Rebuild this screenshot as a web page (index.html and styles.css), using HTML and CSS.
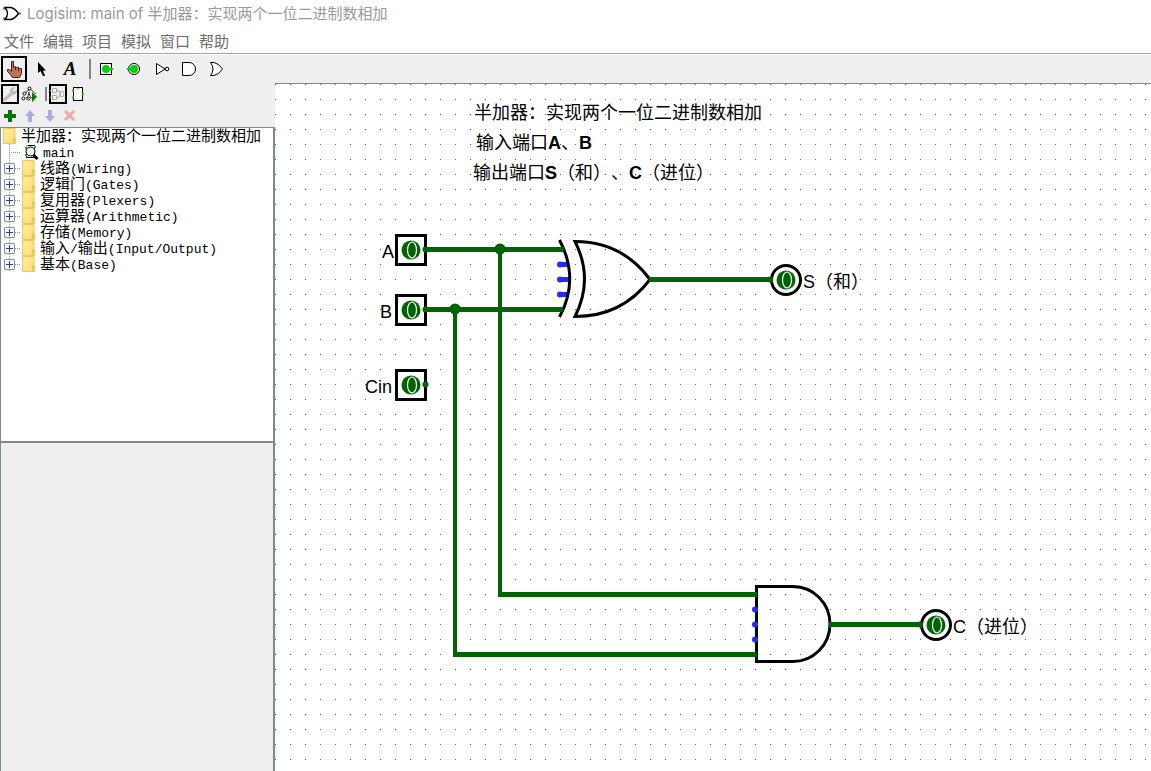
FILE: index.html
```html
<!DOCTYPE html>
<html lang="zh-CN">
<head>
<meta charset="utf-8">
<title>Logisim: main of 半加器：实现两个一位二进制数相加</title>
<link rel="stylesheet" href="styles.css">
</head>
<body>
<svg class="defs" width="0" height="0" aria-hidden="true">
  <defs>
    <linearGradient id="folderFill" x1="0" y1="0" x2="1" y2="1">
      <stop offset="0" stop-color="#ffeda6"/><stop offset="1" stop-color="#ffdb70"/>
    </linearGradient>
    <symbol id="folder" viewBox="0 0 14 16">
      <path d="M.5 .5H12V10H12.500V15.500H.5Z" fill="url(#folderFill)" stroke="#eec850"/>
      <path d="M10.500 15V10.500H12.500" fill="none" stroke="#e6b93c"/>
    </symbol>
    <symbol id="value" viewBox="0 0 20 20">
      <circle cx="10" cy="10" r="9.500" fill="#006400"/>
      <ellipse cx="11" cy="10" rx="4.500" ry="8" fill="none" stroke="#fff" stroke-width="1.200"/>
    </symbol>
  </defs>
</svg>

<header class="titlebar">
  <svg class="app-icon" width="20" height="16" viewBox="0 0 20 16">
    <path d="M1 2.500H4M1 12.500H4M17 7.500H19" stroke="#00c800" stroke-width="2"/>
    <path d="M3 1.500H9Q13 2.500 16.500 7.500Q13 12.500 9 13.500H3Q8 7.500 3 1.500Z" fill="#fff" stroke="#000" stroke-width="1.400"/>
  </svg>
  <h1 class="title">Logisim: main of 半加器：实现两个一位二进制数相加</h1>
</header>

<nav class="menubar" aria-label="菜单">
  <button class="menu">文件</button>
  <button class="menu">编辑</button>
  <button class="menu">项目</button>
  <button class="menu">模拟</button>
  <button class="menu">窗口</button>
  <button class="menu">帮助</button>
</nav>

<div class="toolbar" role="toolbar" aria-label="工具">
  <button class="tool selected" aria-label="戳工具">
    <svg width="20" height="20" viewBox="0 0 20 20"><path d="M7.500 2.500H9.500V8.500L11 7.500L12.500 8.500L14 8L15.500 9.500L17.500 9.500V14.500L15.500 18.500H8.500L6.500 15.500L3.500 12.500V10.500H5.500L7.500 12.500Z" fill="#bf7355" stroke="#41251b"/><path d="M11.500 8V11M14.500 9V12" stroke="#41251b" fill="none"/></svg>
  </button>
  <button class="tool" aria-label="编辑工具">
    <svg width="20" height="20" viewBox="0 0 20 20"><path d="M6 3V14L8.500 12L11 17H13L11 11.500H14Z" fill="#000"/></svg>
  </button>
  <button class="tool letter" aria-label="文本工具">A</button>
  <span class="separator"></span>
  <button class="tool" aria-label="输入引脚">
    <svg width="20" height="20" viewBox="0 0 20 20"><rect x="4.500" y="4.500" width="11" height="11" fill="#fff" stroke="#000"/><circle cx="10" cy="10" r="4" fill="#00d200"/><path d="M12 10H17" stroke="#00d200" stroke-width="2"/></svg>
  </button>
  <button class="tool" aria-label="输出引脚">
    <svg width="20" height="20" viewBox="0 0 20 20"><circle cx="10" cy="10" r="5.500" fill="#fff" stroke="#000"/><circle cx="10" cy="10" r="4" fill="#00d200"/><path d="M3 10H8" stroke="#00d200" stroke-width="2"/></svg>
  </button>
  <button class="tool" aria-label="非门">
    <svg width="20" height="20" viewBox="0 0 20 20"><path d="M4.500 4.500L13 10L4.500 15.500Z" fill="#fff" stroke="#000"/><circle cx="15" cy="10" r="1.800" fill="#fff" stroke="#000"/></svg>
  </button>
  <button class="tool" aria-label="与门">
    <svg width="20" height="20" viewBox="0 0 20 20"><path d="M2.500 3.500H9A6.500 6.500 0 0 1 9 16.500H2.500Z" fill="#fff" stroke="#000"/></svg>
  </button>
  <button class="tool" aria-label="或门">
    <svg width="20" height="20" viewBox="0 0 20 20"><path d="M2.500 3.500H6Q11 4.500 14.500 10Q11 15.500 6 16.500H2.500Q7.500 10 2.500 3.500Z" fill="#fff" stroke="#000"/></svg>
  </button>
</div>

<main class="workspace">
  <aside class="sidebar">
    <div class="minibar view" role="toolbar" aria-label="视图">
      <button class="mini selected" aria-label="工具箱">
        <svg width="16" height="16" viewBox="0 0 16 16"><path d="M1 13L8 6.500Q7 2.500 11 1L13.500 1.500L11 4L12 5.500L15 3.500Q15.500 9 10 9L3.500 15Q1 15.500 1 13Z" fill="#bdbdbd"/></svg>
      </button>
      <button class="mini" aria-label="仿真树">
        <svg width="18" height="18" viewBox="0 0 18 18"><path d="M8 4L2 11M9 4L15 9M8 4V10M8 9L5 14M8 9L11 14" stroke="#000" stroke-dasharray="2 1" fill="none"/><g fill="#fff" stroke="#000"><circle cx="8.500" cy="3.500" r="1.500"/><circle cx="3.500" cy="8.500" r="1.500"/><circle cx="2.500" cy="13.500" r="1.500"/><circle cx="7.500" cy="13.500" r="1.500"/></g><path d="M11 7L16 12L11 17Z" fill="#007d00"/></svg>
      </button>
      <span class="separator small"></span>
      <button class="mini selected" aria-label="编辑电路布局">
        <svg width="16" height="16" viewBox="0 0 16 16"><g fill="#fff" stroke="#aaa"><path d="M2.500 2.500H6.500V6.500H2.500Z"/><path d="M2.500 9.500H6.500V13.500H2.500Z"/><path d="M10.500 5.500H13Q15 8 13 10.500H10.500Z"/></g><path d="M0 4.500H2M0 11.500H2M7 4.500H9V7H10M7 11.500H9V9H10" fill="none" stroke="#90cf90"/></svg>
      </button>
      <button class="mini" aria-label="编辑电路外观">
        <svg width="16" height="16" viewBox="0 0 16 16"><rect x="3.500" y="1.500" width="9" height="13" fill="#fff" stroke="#000"/><path d="M6.500 2Q8 5 9.500 2" fill="none" stroke="#999"/><path d="M2 4.500H4M2 11.500H4M12 8H14" stroke="#00d200" stroke-width="2"/></svg>
      </button>
    </div>
    <div class="minibar edit" role="toolbar" aria-label="电路">
      <button class="mini" aria-label="添加电路"><svg width="16" height="16" viewBox="0 0 16 16"><path d="M6 2H10V6H14V10H10V14H6V10H2V6H6Z" fill="#067806"/></svg></button>
      <button class="mini" aria-label="上移"><svg width="16" height="16" viewBox="0 0 16 16"><path d="M8 2L13 8H10V14H6V8H3Z" fill="#a9a9ec"/></svg></button>
      <button class="mini" aria-label="下移"><svg width="16" height="16" viewBox="0 0 16 16"><path d="M8 14L13 8H10V2H6V8H3Z" fill="#a9a9ec"/></svg></button>
      <button class="mini" aria-label="删除电路"><svg width="16" height="16" viewBox="0 0 16 16"><path d="M3 3L12 12M12 3L3 12" stroke="#eda9a9" stroke-width="3"/></svg></button>
    </div>
    <div class="tree">
      <div class="root"><svg class="folder" width="14" height="16"><use href="#folder"/></svg><span>半加器：实现两个一位二进制数相加</span></div>
      <ul class="branches">
        <li class="node leaf">
          <svg class="circuit" width="16" height="16" viewBox="0 0 16 16"><path d="M4.500 1.500H11.500V13.500H3.500V2.500" fill="#fff" stroke="#000"/><path d="M2 4H4M2 11H4M11 3H13" stroke="#00c800" stroke-width="2"/><circle cx="7.500" cy="7.500" r="4.500" fill="#eef" stroke="#000"/><path d="M10.500 11L14.500 15" stroke="#000" stroke-width="3"/></svg>
          <span><span class="latin">main</span></span>
        </li>
        <li class="node"><button class="expander" aria-label="展开"></button><svg class="folder" width="14" height="16"><use href="#folder"/></svg><span>线路<span class="latin">(Wiring)</span></span></li>
        <li class="node"><button class="expander" aria-label="展开"></button><svg class="folder" width="14" height="16"><use href="#folder"/></svg><span>逻辑门<span class="latin">(Gates)</span></span></li>
        <li class="node"><button class="expander" aria-label="展开"></button><svg class="folder" width="14" height="16"><use href="#folder"/></svg><span>复用器<span class="latin">(Plexers)</span></span></li>
        <li class="node"><button class="expander" aria-label="展开"></button><svg class="folder" width="14" height="16"><use href="#folder"/></svg><span>运算器<span class="latin">(Arithmetic)</span></span></li>
        <li class="node"><button class="expander" aria-label="展开"></button><svg class="folder" width="14" height="16"><use href="#folder"/></svg><span>存储<span class="latin">(Memory)</span></span></li>
        <li class="node"><button class="expander" aria-label="展开"></button><svg class="folder" width="14" height="16"><use href="#folder"/></svg><span>输入<span class="latin">/</span>输出<span class="latin">(Input/Output)</span></span></li>
        <li class="node"><button class="expander" aria-label="展开"></button><svg class="folder" width="14" height="16"><use href="#folder"/></svg><span>基本<span class="latin">(Base)</span></span></li>
      </ul>
    </div>
    <div class="attributes"></div>
  </aside>

  <section class="canvas" aria-label="电路画布">
    <svg class="circuit-view" width="100%" height="100%">
      <defs>
        <pattern id="grid" width="15" height="15" patternUnits="userSpaceOnUse"><rect width="1" height="1" fill="#666"/></pattern>
      </defs>
      <rect width="100%" height="100%" fill="url(#grid)"/>
      <g transform="translate(-275 -84)">
        <g class="wires">
          <path d="M425 249.500H564M425 309.500H564M650 279.500H772M830 624.500H922M498 594.500H757M453 654.500H757"/>
          <path d="M500 249V597M455 309V657"/>
        </g>
        <g class="junctions">
          <circle cx="500" cy="249" r="5.500"/><circle cx="455" cy="309" r="5.500"/>
        </g>
        <g class="outline">
          <rect x="396.500" y="235.500" width="29" height="29"/>
          <rect x="396.500" y="295.500" width="29" height="29"/>
          <rect x="396.500" y="370.500" width="29" height="29"/>
          <circle cx="786" cy="280" r="14.500"/>
          <circle cx="936" cy="625" r="14.500"/>
        </g>
        <g class="junctions">
          <circle cx="425.500" cy="249.500" r="3"/><circle cx="425.500" cy="309.500" r="3"/><circle cx="425.500" cy="384.500" r="3"/>
          <circle cx="770" cy="279.500" r="3"/><circle cx="920" cy="624.500" r="3"/>
        </g>
        <use href="#value" x="401" y="240" width="20" height="20"/>
        <use href="#value" x="401" y="300" width="20" height="20"/>
        <use href="#value" x="401" y="375" width="20" height="20"/>
        <use href="#value" x="776" y="270" width="20" height="20"/>
        <use href="#value" x="926" y="615" width="20" height="20"/>

        <g class="floating">
          <path d="M559 264.500H569M559 279.500H569M559 294.500H569"/>
          <circle cx="560" cy="264.500" r="3"/><circle cx="560" cy="279.500" r="3"/><circle cx="560" cy="294.500" r="3"/>
        </g>
        <g class="outline">
          <path d="M559.500 240Q580 279 559.500 317"/>
          <path d="M575 241.500Q622 241.500 650 279.500Q622 316.500 575 316.500Q594 279 575 241.500Z"/>
          <path d="M756.500 586.500H793A37 37.500 0 0 1 793 661.500H756.500Z"/>
        </g>
        <path class="wires" d="M560 249.500H564M560 309.500H563M649 279.500H653M754 594.500H757M754 654.500H757M829 624.500H832"/>
        <g class="floating">
          <circle cx="755" cy="609.500" r="3"/><circle cx="755" cy="624.500" r="3"/><circle cx="755" cy="639.500" r="3"/>
        </g>

        <g class="label">
          <text x="382" y="258">A</text>
          <text x="380" y="318">B</text>
          <text x="365" y="393">Cin</text>
          <text x="803" y="288">S（和）</text>
          <text x="953" y="633">C（进位）</text>
        </g>
        <g class="label">
          <text x="474" y="119">半加器：实现两个一位二进制数相加</text>
          <text x="476" y="149">输入端口<tspan class="bold">A</tspan>、<tspan class="bold">B</tspan></text>
          <text x="473" y="179">输出端口<tspan class="bold">S</tspan>（和）、<tspan class="bold">C</tspan>（进位）</text>
        </g>
      </g>
    </svg>
  </section>
</main>
</body>
</html>
```
FILE: styles.css
```css
* { box-sizing: border-box; }

body {
  margin: 0;
  height: 100vh;
  display: flex;
  flex-direction: column;
  background: #fff;
  color: #000;
  font: 15px "Noto Sans", "Noto Sans CJK SC", sans-serif;
  text-spacing-trim: space-all;
  overflow: hidden;
}

button {
  padding: 0;
  border: 0;
  background: none;
  color: inherit;
  font: inherit;
}

svg { display: block; flex: none; }
.defs { position: absolute; }

.titlebar {
  display: flex;
  align-items: center;
  gap: 5px;
  height: 28px;
  padding-left: 2px;
}

.title {
  margin: 0;
  color: #999;
  font-size: 15px;
  font-weight: 400;
  line-height: 20px;
  font-family: Inter, "Noto Sans CJK SC", sans-serif;
  white-space: nowrap;
}

.menubar {
  display: flex;
  align-items: flex-start;
  gap: 9px;
  height: 26px;
  padding: 2px 0 0 4px;
  border-bottom: 1px solid #a0a0a0;
  color: #6d6d6d;
  font-family: "Noto Sans CJK SC", sans-serif;
}

.toolbar {
  display: flex;
  align-items: center;
  height: 29px;
  border-top: 1px solid #fff;
  background: #efefef;
}

.tool, .mini {
  display: flex;
  align-items: center;
  justify-content: center;
}

.tool { width: 26px; height: 26px; margin: 0 1px; }
.mini { width: 18px; height: 20px; margin: 0 1px; }
.selected { border: 2px solid #000; }

.letter {
  font: italic bold 19px "Liberation Serif", serif;
}

.separator {
  width: 2px;
  height: 20px;
  margin: 0 1px 0 5px;
  background: #828282;
}

.separator.small { height: 14px; }

.workspace {
  flex: 1;
  display: flex;
  min-height: 0;
}

.sidebar {
  display: flex;
  flex-direction: column;
  width: 275px;
  background: #efefef;
}

.minibar { display: flex; align-items: center; }
.view { height: 21px; }
.edit { height: 23px; }

.tree {
  flex: 313 0 0;
  border: 1px solid #828790;
  border-width: 1px 2px 2px 1px;
  background: #fff;
  font: 15px/15px "Liberation Sans", "Noto Sans CJK SC", sans-serif;
  white-space: nowrap;
}

.attributes {
  flex: 328 0 0;
  border: 1px solid #828790;
  border-width: 0 2px 0 1px;
}

.root { display: flex; gap: 4px; padding-left: 2px; height: 16px; }

.branches {
  margin: 0;
  padding: 0 0 0 3px;
  list-style: none;
}

.node {
  display: flex;
  align-items: center;
  height: 16px;
  background:
    repeating-linear-gradient(#999 0 1px, transparent 1px 2px) 5px 0 / 1px 100% no-repeat,
    repeating-linear-gradient(90deg, #999 0 1px, transparent 1px 2px) 5px 8px / 12px 1px no-repeat;
}

.node .folder { margin: 0 4px 0 7px; }
.leaf .circuit { margin: 0 4px 0 19px; }

.expander {
  width: 11px;
  height: 11px;
  border: 1px solid #919191;
  border-radius: 1px;
  background:
    linear-gradient(#2b478f, #2b478f) center / 7px 1px no-repeat,
    linear-gradient(#2b478f, #2b478f) center / 1px 7px no-repeat,
    #f4f4f4;
}

.latin { font-family: "Liberation Mono", monospace; font-size: 13px; }

.canvas {
  flex: 1;
  min-width: 0;
  border-top: 1px solid #828790;
  background: #fff;
}

.wires { fill: none; stroke: #006400; stroke-width: 5; }
.wires path + path { stroke-width: 4; }
.junctions { fill: #006400; }
.outline { fill: none; stroke: #000; stroke-width: 3; }
.floating { fill: #2828ff; stroke: #2828ff; stroke-width: 5; }
.floating circle { stroke: none; }

.label { font: 18px "Liberation Sans", "Noto Sans CJK SC", sans-serif; }
.bold { font-weight: 700; }
```
